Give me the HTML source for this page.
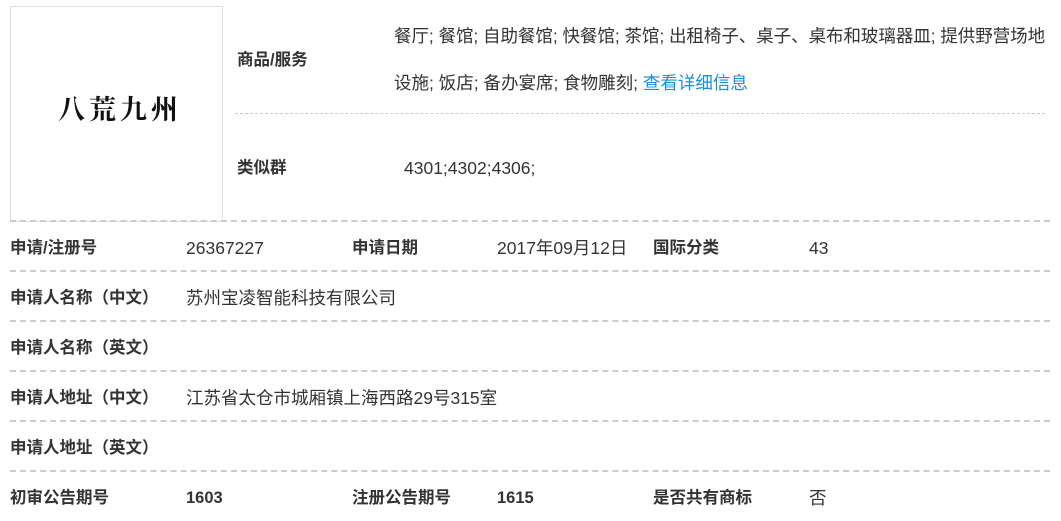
<!DOCTYPE html>
<html><head><meta charset="utf-8"><style>
body{margin:0;width:1061px;height:521px;background:#fff;position:relative;overflow:hidden;font-family:"Liberation Sans","Noto Sans CJK SC",sans-serif;font-size:17.5px;color:#333}
.a{position:absolute;white-space:nowrap;line-height:20px}
.b{font-weight:bold;font-size:16.5px}
.hr{position:absolute;left:10px;width:1040px;border-top:2px dashed #ccc;height:0}
</style></head><body>
<div style="position:absolute;left:10px;top:6px;width:211px;height:214px;border:1px solid #ddd"></div>
<div class="a" style="left:58px;top:92px;font-size:27px;line-height:32px;font-family:'Noto Serif CJK SC',serif;font-weight:bold;color:#111;letter-spacing:4px">八荒九州</div>
<div class="a b" style="left:237px;top:50px">商品/服务</div>
<div class="a" style="left:394px;top:26px;letter-spacing:-0.05px">餐厅; 餐馆; 自助餐馆; 快餐馆; 茶馆; 出租椅子、桌子、桌布和玻璃器皿; 提供野营场地</div>
<div class="a" style="left:394px;top:73px">设施; 饭店; 备办宴席; 食物雕刻; <span style="color:#1a8fd8">查看详细信息</span></div>
<div style="position:absolute;left:235px;top:113px;width:810px;border-top:1px dashed #ccc"></div>
<div class="a b" style="left:237px;top:158px">类似群</div>
<div class="a" style="left:404px;top:158px">4301;4302;4306;</div>
<div class="hr" style="top:220px"></div>
<div class="a b" style="left:10px;top:238px">申请/注册号</div>
<div class="a" style="left:186px;top:238px">26367227</div>
<div class="a b" style="left:352px;top:238px">申请日期</div>
<div class="a" style="left:497px;top:238px">2017年09月12日</div>
<div class="a b" style="left:653px;top:238px">国际分类</div>
<div class="a" style="left:809px;top:238px">43</div>
<div class="hr" style="top:270px"></div>
<div class="a b" style="left:10px;top:288px">申请人名称（中文）</div>
<div class="a" style="left:186px;top:288px">苏州宝凌智能科技有限公司</div>
<div class="hr" style="top:320px"></div>
<div class="a b" style="left:10px;top:338px">申请人名称（英文）</div>
<div class="hr" style="top:370px"></div>
<div class="a b" style="left:10px;top:388px">申请人地址（中文）</div>
<div class="a" style="left:186px;top:388px">江苏省太仓市城厢镇上海西路29号315室</div>
<div class="hr" style="top:420px"></div>
<div class="a b" style="left:10px;top:438px">申请人地址（英文）</div>
<div class="hr" style="top:470px"></div>
<div class="a b" style="left:10px;top:488px">初审公告期号</div>
<div class="a b" style="left:186px;top:488px">1603</div>
<div class="a b" style="left:352px;top:488px">注册公告期号</div>
<div class="a b" style="left:497px;top:488px">1615</div>
<div class="a b" style="left:653px;top:488px">是否共有商标</div>
<div class="a" style="left:809px;top:488px">否</div>
</body></html>
